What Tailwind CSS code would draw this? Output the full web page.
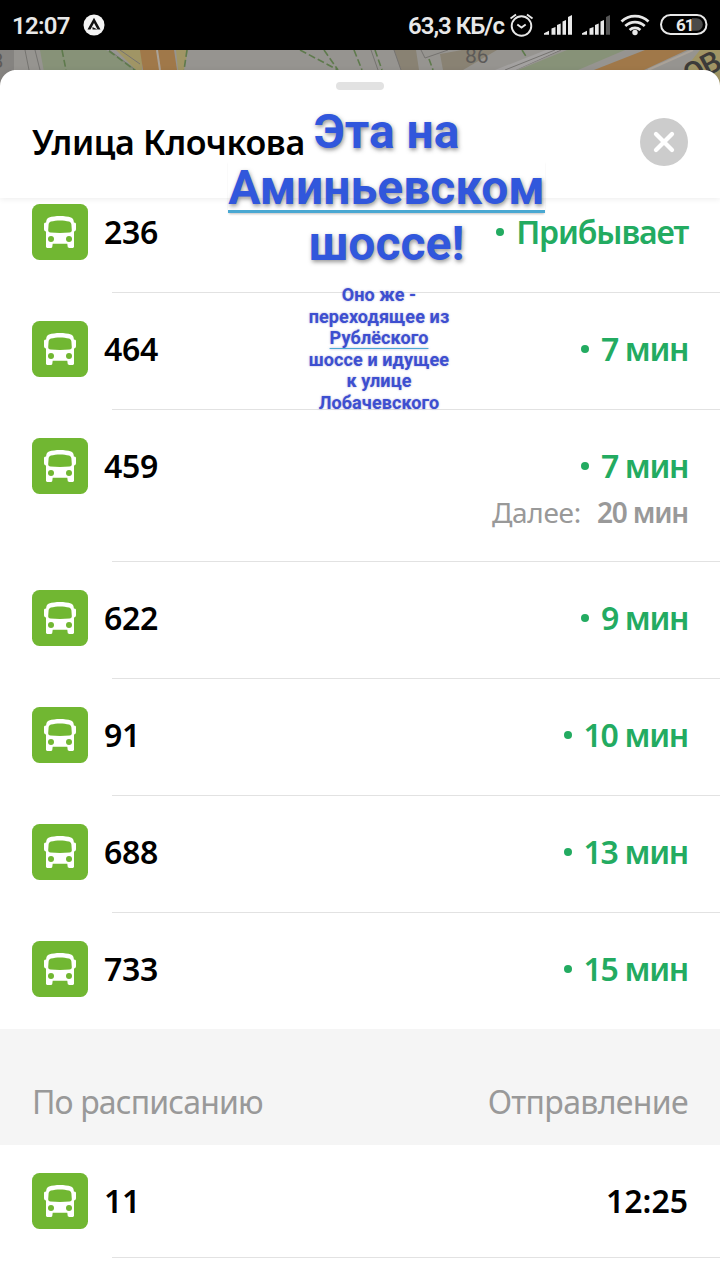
<!DOCTYPE html>
<html lang="ru">
<head>
<meta charset="utf-8">
<title>Улица Клочкова</title>
<script src="https://cdn.jsdelivr.net/npm/@tailwindcss/browser@4"></script>
</head>
<body class="w-[720px] h-[1280px] overflow-hidden bg-white text-black font-['Noto_Sans',sans-serif]">
<svg class="hidden">
  <symbol id="bus" viewBox="0 0 56 56">
    <rect width="56" height="56" rx="7.5" fill="#71b732"/>
    <path d="M17 13.500c6-2 16-2 22 0 2 .7 2.700 2.300 2.900 5l1.300.3c.6.2.8.6.8 1.200v5c0 1.500-.8 2.200-2 2.400V42.500c0 .9-.5 1.400-1.300 1.400H37c-.8 0-1.200-.4-1.300-1.200l-.4-3H20.700l-.4 3c-.1.800-.5 1.200-1.300 1.200h-3.700c-.8 0-1.300-.5-1.300-1.400V27.400c-1.200-.2-2-.9-2-2.400v-5c0-.6.2-1 .8-1.200l1.300-.3c.2-2.700.9-4.300 2.900-5z" fill="#fff"/>
    <path d="M19 17.600c5-1.600 13-1.600 18 0 1.600.5 2.200 1.500 2.400 3l.4 5.400c.1 1.600-.7 2.400-2.300 2.500-6 .5-13 .5-19 0-1.600-.1-2.400-.9-2.300-2.500l.4-5.400c.2-1.500.8-2.500 2.400-3z" fill="#71b732"/>
    <circle cx="19" cy="35" r="3" fill="#71b732"/><circle cx="37" cy="35" r="3" fill="#71b732"/>
  </symbol>
</svg>
<div class="relative flex flex-col w-[720px] h-[1280px] overflow-hidden">
  <div class="flex items-center h-[50px] shrink-0 bg-black text-[#e8e8e8] font-['Roboto',sans-serif] font-semibold text-[24px]">
    <span class="pl-3 pt-0.5 w-[83px] whitespace-nowrap tracking-[-0.7px]">12:07</span>
    <svg class="w-[22px] h-[22px]" viewBox="0 0 22 22"><circle cx="11" cy="11" r="10.500" fill="#f4f4f4"/><path d="M11 3.800 4.500 15.500h3L11 9l3.500 6.500h3z M9.500 13l5 2.500h-5z" fill="#111"/></svg>
    <span class="ml-auto pt-0.5 w-[102px] whitespace-nowrap tracking-[-1px]">63,3 КБ/с</span>
    <svg class="w-[210px] h-[50px]" viewBox="510 0 210 50" fill="none" stroke="#e8e8e8">
      <circle cx="521.500" cy="26" r="9.800" stroke-width="1.900"/>
      <path d="M517.300 24.500l4.200 3 4.200-3M510.500 18.500l5.500-4M532.500 18.500l-5.500-4" stroke-width="1.900"/>
      <g fill="#e8e8e8" stroke="none">
        <path d="M544 34.700v-1.500l5-2.500v4zM551.500 28.500l4-1.500v7.700h-4zM557 25l3.700-1.500v11.200H557zM562.500 21.500l3.500-1.500v14.700h-3.500zM568 17l4-2v19.700h-4z"/>
        <path d="M582 34.700v-1.500l5-2.500v4zM589.500 28.500l4-1.500v7.700h-4zM595 25l3.700-1.500v11.200H595zM600.500 21.500l3.500-1.500v14.700h-3.500z"/>
        <path d="M606 17l4-2v19.700h-4z" fill="#555"/>
        <circle cx="635" cy="32.500" r="2.700"/>
      </g>
      <path d="M621.500 21.500a19.500 19.500 0 0 1 27 0M625.300 26a14 14 0 0 1 19.400 0M629.600 30a8 8 0 0 1 10.800 0" stroke-width="2.700"/>
      <rect x="661" y="15" width="45.500" height="19" rx="9.500" stroke-width="2"/>
      <path d="M692 18.200h4.500a6.300 6.300 0 0 1 0 12.600H692z" fill="#4a4a4a" stroke="none"/>
      <text x="676" y="30.500" font-family="Roboto" font-weight="700" font-size="17" letter-spacing="-1" fill="#e8e8e8" stroke="none">61</text>
    </svg>
  </div>
  <div class="h-5 shrink-0 bg-[#969490]">
    <svg class="w-[720px] h-[40px]" viewBox="0 50 720 40" fill="none">
      <path d="M0 50h14v40H0z" fill="#858380"/>
      <path d="M40 50h66l36 22H44z" fill="#879278"/>
      <path d="M116 50h26v20h-6z" fill="#a09565"/><path d="M176 50h12l-4 20h-6z" fill="#a09565"/>
      <path d="M140 50h34l3 20h-34z" fill="#a07849"/>
      <path d="M157 50l3 20" stroke="#aaa298" stroke-width="2"/>
      <path d="M25 50l4 20M35 50l5 20M109 50l25 19M120 50l20 14" stroke="#757370"/>
      <path d="M62 50l4 20M109 51l27 20M187 50l-3 20M300 50l38 20M324 50l14 20M354 50l8 20M375 50l7 20M429 59l4 11M522 50l5 8" stroke="#5e7a4c" stroke-width="1.600" stroke-dasharray="7 3"/>
      <path d="M394 50h22l3 20h-18zM440 54l22-4h35l-34 20h-20z" fill="#898273"/>
      <path d="M371 50l7 20M394 50l7 20M421 50l4 8 23-8M515 70l46-20" stroke="#757370"/>
      <path d="M495 70l51-20h14l-44 20z" fill="#a3a1a0"/>
      <path d="M567 50h58l-47 20h-60z" fill="#879278"/><path d="M505 70l50-20" stroke="#757370"/>
      <path d="M645 50h42l-43 20h-50z" fill="#a07849"/>
      <path d="M693 50l-45 20" stroke="#aaa298" stroke-width="2"/>
      <path d="M700 50h20v40l-36-20z" fill="#a09565"/>
      <text x="465" y="63" font-family="Roboto" font-size="21" fill="#5c5a58">86</text>
      <text x="-8" y="68" font-family="Roboto" font-size="20" fill="#5c5a58">8</text>
      <text transform="translate(690 86) rotate(-28)" font-family="Roboto" font-weight="500" font-size="30" letter-spacing="-1" fill="#3c3b39">ОВ</text>
    </svg>
  </div>
  <header class="relative z-10 h-32 shrink-0 bg-white rounded-t-2xl flex flex-col shadow-[0_1px_6px_rgba(0,0,0,0.08)]">
    <div class="w-12 h-2 mt-3 rounded-full bg-[#e2e2e2] self-center"></div>
    <div class="flex items-center justify-between h-12 mt-7 px-8">
      <h1 class="text-[34px] font-semibold whitespace-nowrap leading-[48px] tracking-[-0.33px]">Улица Клочкова</h1>
      <svg class="w-12 h-12" viewBox="0 0 48 48"><circle cx="24" cy="24" r="24" fill="#ccc"/><path d="M16 16l16 16M32 16L16 32" stroke="#fff" stroke-width="4.300" stroke-linecap="round"/></svg>
    </div>
  </header>
  <main class="flex flex-col -mt-[22px] text-[32px] font-semibold leading-[56px] whitespace-nowrap">
    <section class="relative flex pt-7 pl-8 h-[117px] shrink-0">
      <svg class="w-14 h-14 mr-4"><use href="#bus"/></svg><span class="tracking-[-0.3px]">236</span>
      <div class="ml-auto mr-8 text-[#23ab61] flex"><i class="size-2 rounded-full bg-[#23ab61] mt-6 mr-3"></i><span class="tracking-[-1.1px]">Прибывает</span></div>
      <i class="absolute left-28 right-0 bottom-0 h-px bg-[#e2e2e2]"></i>
    </section>
    <section class="relative flex pt-7 pl-8 h-[117px] shrink-0">
      <svg class="w-14 h-14 mr-4"><use href="#bus"/></svg><span class="tracking-[-0.3px]">464</span>
      <div class="ml-auto mr-8 text-[#23ab61] flex"><i class="size-2 rounded-full bg-[#23ab61] mt-6 mr-3"></i><span class="tracking-[-1.4px]">7 мин</span></div>
      <i class="absolute left-28 right-0 bottom-0 h-px bg-[#e2e2e2]"></i>
    </section>
    <section class="relative flex pt-7 pl-8 h-[152px] shrink-0">
      <svg class="w-14 h-14 mr-4"><use href="#bus"/></svg><span class="tracking-[-0.3px]">459</span>
      <div class="ml-auto mr-8 flex flex-col items-end">
        <div class="text-[#23ab61] flex"><i class="size-2 rounded-full bg-[#23ab61] mt-6 mr-3"></i><span class="tracking-[-1.4px]">7 мин</span></div>
        <div class="flex gap-4 text-[28px] leading-9 text-[#999]"><span class="font-normal tracking-[-0.3px]">Далее:</span><span class="tracking-[-1.2px]">20 мин</span></div>
      </div>
      <i class="absolute left-28 right-0 bottom-0 h-px bg-[#e2e2e2]"></i>
    </section>
    <section class="relative flex pt-7 pl-8 h-[117px] shrink-0">
      <svg class="w-14 h-14 mr-4"><use href="#bus"/></svg><span class="tracking-[-0.3px]">622</span>
      <div class="ml-auto mr-8 text-[#23ab61] flex"><i class="size-2 rounded-full bg-[#23ab61] mt-6 mr-3"></i><span class="tracking-[-1.4px]">9 мин</span></div>
      <i class="absolute left-28 right-0 bottom-0 h-px bg-[#e2e2e2]"></i>
    </section>
    <section class="relative flex pt-7 pl-8 h-[117px] shrink-0">
      <svg class="w-14 h-14 mr-4"><use href="#bus"/></svg><span class="tracking-[-0.3px]">91</span>
      <div class="ml-auto mr-8 text-[#23ab61] flex"><i class="size-2 rounded-full bg-[#23ab61] mt-6 mr-3"></i><span class="tracking-[-1.3px]">10 мин</span></div>
      <i class="absolute left-28 right-0 bottom-0 h-px bg-[#e2e2e2]"></i>
    </section>
    <section class="relative flex pt-7 pl-8 h-[117px] shrink-0">
      <svg class="w-14 h-14 mr-4"><use href="#bus"/></svg><span class="tracking-[-0.3px]">688</span>
      <div class="ml-auto mr-8 text-[#23ab61] flex"><i class="size-2 rounded-full bg-[#23ab61] mt-6 mr-3"></i><span class="tracking-[-1.3px]">13 мин</span></div>
      <i class="absolute left-28 right-0 bottom-0 h-px bg-[#e2e2e2]"></i>
    </section>
    <section class="flex pt-7 pl-8 h-[116px] shrink-0">
      <svg class="w-14 h-14 mr-4"><use href="#bus"/></svg><span class="tracking-[-0.3px]">733</span>
      <div class="ml-auto mr-8 text-[#23ab61] flex"><i class="size-2 rounded-full bg-[#23ab61] mt-6 mr-3"></i><span class="tracking-[-1.3px]">15 мин</span></div>
    </section>
    <div class="flex justify-between h-[116px] shrink-0 px-8 pt-11 bg-[#f5f5f5] text-[#999] font-normal leading-[57px]">
      <span class="tracking-[-0.85px]">По расписанию</span><span class="tracking-[-0.65px]">Отправление</span>
    </div>
    <section class="relative flex pt-7 pl-8 h-[113px] shrink-0">
      <svg class="w-14 h-14 mr-4"><use href="#bus"/></svg><span class="tracking-[-0.3px]">11</span>
      <span class="ml-auto mr-8">12:25</span>
      <i class="absolute left-28 right-0 bottom-0 h-px bg-[#e2e2e2]"></i>
    </section>
  </main>

  <!-- Caption overlays -->
  <div class="absolute z-20 left-[206px] top-[104px] w-[361px] text-center font-['Roboto',sans-serif] font-bold text-[48px] leading-[56px] text-[#3157dc] whitespace-nowrap [text-shadow:1px_2px_4px_rgba(60,60,60,0.55)]">
    <p>Эта на</p>
    <p class="h-14"><span class="border-b-[3px] border-[#4aa8d2] inline-block h-[53px] align-top shadow-[0_2px_2px_-1px_rgba(100,100,100,0.4)]">Аминьевском</span></p>
    <p>шоссе!</p>
  </div>
  <div class="absolute z-20 left-[299px] top-[284px] w-[160px] text-center font-['Roboto',sans-serif] font-bold text-[18px] tracking-[0.1px] leading-[21.5px] text-[#3d4fd0] whitespace-nowrap [text-shadow:0_0_2px_rgba(80,80,180,0.5)]">
    <p>Оно же -</p><p>переходящее из</p><p class="underline decoration-[#4aa8d2] decoration-1 underline-offset-[4px] [text-decoration-skip-ink:none]">Рублёского</p><p>шоссе и идущее</p><p>к улице</p><p>Лобачевского</p>
  </div>
</div>
</body>
</html>
